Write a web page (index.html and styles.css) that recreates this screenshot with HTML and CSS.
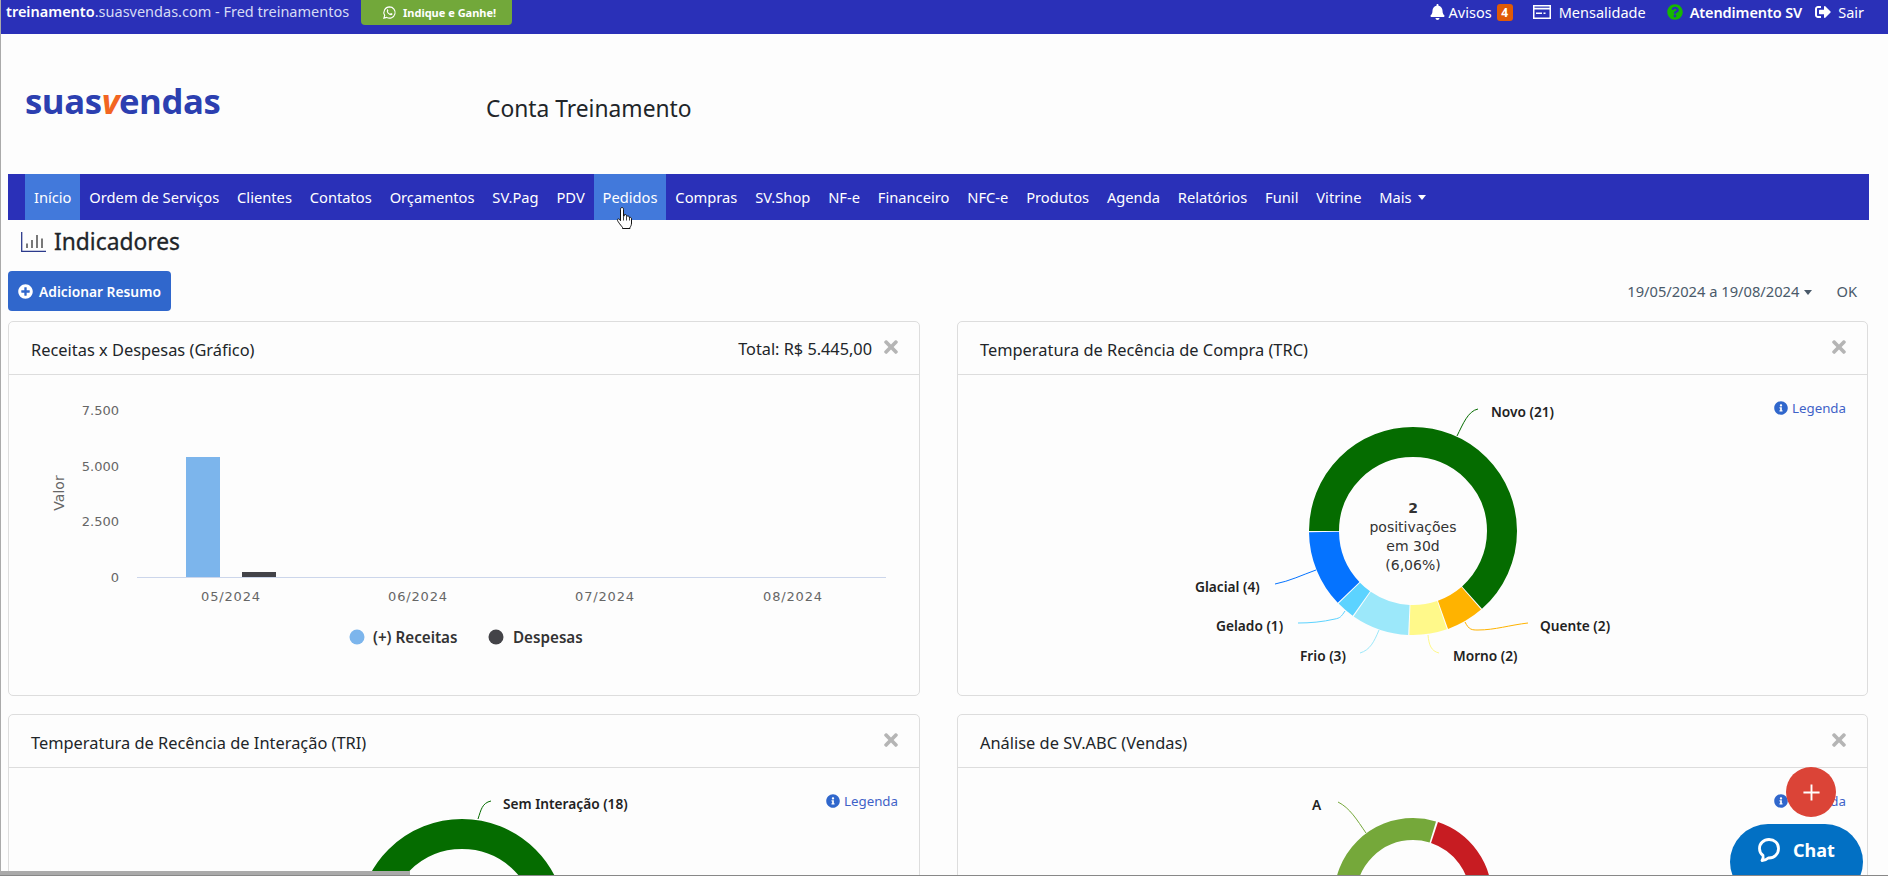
FILE: index.html
```html
<!DOCTYPE html>
<html lang="pt-BR">
<head>
    <meta charset="UTF-8">
    <meta name="viewport" content="width=device-width, initial-scale=1.0">
    <title>Indicadores - suasvendas</title>
    <link rel="stylesheet" href="styles.css">
</head>
<body>
    <svg class="icon-defs" width="0" height="0">
        <symbol id="i-close" viewBox="0 0 352 512"><path d="M242.72 256l100.07-100.07c12.28-12.28 12.28-32.19 0-44.48l-22.24-22.24c-12.28-12.28-32.19-12.28-44.48 0L176 189.28 75.93 89.21c-12.28-12.28-32.19-12.28-44.48 0L9.21 111.45c-12.28 12.28-12.28 32.19 0 44.48L109.28 256 9.21 356.07c-12.28 12.28-12.28 32.19 0 44.48l22.24 22.24c12.28 12.28 32.2 12.28 44.48 0L176 322.72l100.07 100.07c12.28 12.28 32.2 12.28 44.48 0l22.24-22.24c12.28-12.28 12.28-32.19 0-44.48L242.72 256z"/></symbol>
        <symbol id="i-info" viewBox="0 0 512 512"><path d="M256 8C119.043 8 8 119.083 8 256c0 136.997 111.043 248 248 248s248-111.003 248-248C504 119.083 392.957 8 256 8zm0 110c23.196 0 42 18.804 42 42s-18.804 42-42 42-42-18.804-42-42 18.804-42 42-42zm56 254c0 6.627-5.373 12-12 12h-88c-6.627 0-12-5.373-12-12v-24c0-6.627 5.373-12 12-12h12v-64h-12c-6.627 0-12-5.373-12-12v-24c0-6.627 5.373-12 12-12h64c6.627 0 12 5.373 12 12v100h12c6.627 0 12 5.373 12 12v24z"/></symbol>
    </svg>

    <header class="topbar">
        <div class="topbar-left">
            <span class="site"><b>treinamento</b>.suasvendas.com - Fred treinamentos</span>
            <a class="btn-indique">
                <svg class="wa" viewBox="0 0 24 24"><path d="M12 3a9 9 0 0 0-7.7 13.6L3 21l4.5-1.2A9 9 0 1 0 12 3z" fill="none" stroke="#fff" stroke-width="1.8"/><path d="M8.6 7.6c-.5.4-1.1 1.2-1 2.3.2 1.700 1.300 3.300 2.700 4.500 1.400 1.200 2.900 1.900 4.300 1.900 1 0 1.900-.7 2.200-1.500.1-.4.1-.8 0-.9l-2.200-1.100c-.2-.1-.4 0-.5.1l-.8 1c-.1.200-.3.200-.5.100-1.400-.6-2.700-1.800-3.400-3.200-.1-.2 0-.3.100-.5l.6-.8c.1-.1.100-.3.100-.4l-.9-2.200c-.2-.5-.4-.5-.7-.5h-.5z" fill="#fff"/></svg>
                Indique e Ganhe!
            </a>
        </div>
        <nav class="topbar-right">
            <a class="top-link avisos">
                <svg class="ti bell" viewBox="0 0 448 512"><path d="M224 512c35.32 0 63.97-28.65 63.97-64H160.03c0 35.35 28.65 64 63.97 64zm215.39-149.71c-19.32-20.76-55.47-51.99-55.47-154.29 0-77.7-54.48-139.9-127.94-155.16V32c0-17.67-14.32-32-31.98-32s-31.98 14.33-31.98 32v20.84C118.56 68.1 64.08 130.3 64.08 208c0 102.3-36.15 133.53-55.47 154.29-6 6.45-8.66 14.16-8.61 21.71.11 16.4 12.98 32 32.1 32h383.8c19.12 0 32-15.6 32.1-32 .05-7.55-2.61-15.27-8.61-21.71z"/></svg>
                Avisos <span class="badge">4</span>
            </a>
            <a class="top-link mensal">
                <svg class="ti card-ico" viewBox="0 0 18 16"><path fill-rule="evenodd" d="M0 1h18v14H0zM1.500 5.500v8h15v-8zM1.500 2.500v1.300h15V2.500zM3 8.500h6v1.500H3zM10.500 8.500h2v1.500h-2z"/></svg>
                Mensalidade
            </a>
            <a class="top-link atend">
                <svg class="ti help" viewBox="0 0 512 512"><path d="M504 256c0 136.997-111.043 248-248 248S8 392.997 8 256C8 119.083 119.043 8 256 8s248 111.083 248 248zM262.655 90c-54.497 0-89.255 22.957-116.549 63.758-3.536 5.286-2.353 12.415 2.715 16.258l34.699 26.31c5.205 3.947 12.621 3.008 16.665-2.122 17.864-22.658 30.113-35.797 57.303-35.797 20.429 0 45.698 13.148 45.698 32.958 0 14.976-12.363 22.667-32.534 33.976C247.128 238.528 216 254.941 216 296v4c0 6.627 5.373 12 12 12h56c6.627 0 12-5.373 12-12v-1.333c0-28.462 83.186-29.647 83.186-106.667 0-58.002-60.165-102-116.531-102zM256 338c-25.365 0-46 20.635-46 46 0 25.364 20.635 46 46 46s46-20.636 46-46c0-25.365-20.635-46-46-46z"/></svg>
                <b>Atendimento SV</b>
            </a>
            <a class="top-link sair">
                <svg class="ti" viewBox="0 0 512 512"><path d="M497 273L329 441c-15 15-41 4.500-41-17v-96H152c-13.300 0-24-10.700-24-24v-96c0-13.300 10.700-24 24-24h136V88c0-21.400 25.900-32 41-17l168 168c9.300 9.400 9.300 24.600 0 34zM192 436v-40c0-6.600-5.400-12-12-12H96c-17.700 0-32-14.300-32-32V160c0-17.700 14.300-32 32-32h84c6.600 0 12-5.400 12-12V76c0-6.600-5.400-12-12-12H96c-53 0-96 43-96 96v192c0 53 43 96 96 96h84c6.600 0 12-5.400 12-12z"/></svg>
                Sair
            </a>
        </nav>
    </header>

    <div class="brand-row">
        <div class="logo">suas<i>v</i>endas</div>
        <div class="account">Conta Treinamento</div>
    </div>

    <nav class="mainnav">
        <a class="active">Início</a>
        <a>Ordem de Serviços</a>
        <a>Clientes</a>
        <a>Contatos</a>
        <a>Orçamentos</a>
        <a>SV.Pag</a>
        <a>PDV</a>
        <a class="hover">Pedidos</a>
        <a>Compras</a>
        <a>SV.Shop</a>
        <a>NF-e</a>
        <a>Financeiro</a>
        <a>NFC-e</a>
        <a>Produtos</a>
        <a>Agenda</a>
        <a>Relatórios</a>
        <a>Funil</a>
        <a>Vitrine</a>
        <a class="more">Mais <span class="caret"></span></a>
    </nav>

    <h1 class="page-title">
        <svg class="title-ico" viewBox="0 0 25 20"><path d="M.7 0v19.300H25" fill="none" stroke="#2b3a8c" stroke-width="1.300"/><path d="M6 11.500v4.500M11 8v8M16 3v13M21 6.500V16" fill="none" stroke="#333" stroke-width="1.300"/></svg>
        Indicadores
    </h1>

    <div class="toolbar">
        <a class="btn-add">
            <svg viewBox="0 0 512 512"><path d="M256 8C119 8 8 119 8 256s111 248 248 248 248-111 248-248S393 8 256 8zm144 276c0 6.600-5.400 12-12 12h-92v92c0 6.600-5.400 12-12 12h-56c-6.600 0-12-5.400-12-12v-92h-92c-6.600 0-12-5.400-12-12v-56c0-6.600 5.400-12 12-12h92v-92c0-6.600 5.400-12 12-12h56c6.600 0 12 5.400 12 12v92h92c6.600 0 12 5.400 12 12v56z"/></svg>
            Adicionar Resumo
        </a>
        <div class="period">
            <span>19/05/2024 a 19/08/2024</span><span class="caret dark"></span>
            <span class="ok">OK</span>
        </div>
    </div>

    <main class="cards">
        <section class="card">
            <div class="card-head">
                <h2>Receitas x Despesas (Gráfico)</h2>
                <span class="total">Total: R$ 5.445,00</span>
                <svg class="close"><use href="#i-close"/></svg>
            </div>
            <div class="card-body">
                <svg class="chart" viewBox="9 375 910 320">
                    <g class="axis-y">
                        <text x="119" y="415">7.500</text>
                        <text x="119" y="471">5.000</text>
                        <text x="119" y="526">2.500</text>
                        <text x="119" y="582">0</text>
                    </g>
                    <text class="axis-title" transform="translate(64 493) rotate(-90)">Valor</text>
                    <rect x="186" y="457" width="34" height="120" fill="#7cb5ec"/>
                    <rect x="242" y="572" width="34" height="5" fill="#434348"/>
                    <path d="M137 577.500H886" stroke="#ccd6eb"/>
                    <g class="axis-x">
                        <text x="231" y="601">05/2024</text>
                        <text x="418" y="601">06/2024</text>
                        <text x="605" y="601">07/2024</text>
                        <text x="793" y="601">08/2024</text>
                    </g>
                    <circle cx="357" cy="637" r="7.500" fill="#7cb5ec"/>
                    <text class="legend" x="373" y="643">(+) Receitas</text>
                    <circle cx="496" cy="637" r="7.500" fill="#434348"/>
                    <text class="legend" x="513" y="643">Despesas</text>
                </svg>
            </div>
        </section>

        <section class="card">
            <div class="card-head">
                <h2>Temperatura de Recência de Compra (TRC)</h2>
                <svg class="close"><use href="#i-close"/></svg>
            </div>
            <div class="card-body">
                <a class="legenda"><svg><use href="#i-info"/></svg>Legenda</a>
                <svg class="chart" viewBox="958 375 910 320">
                    <!-- pathLength = total de contatos (33), cada fatia com 0.06 de folga -->
                    <g class="donut" transform="rotate(180 1413 531)">
                        <circle cx="1413" cy="531" r="89" pathLength="33" stroke="#056c00" stroke-dasharray="20.94 33"/>
                        <circle cx="1413" cy="531" r="89" pathLength="33" stroke="#ffb300" stroke-dasharray="1.94 33" stroke-dashoffset="-21"/>
                        <circle cx="1413" cy="531" r="89" pathLength="33" stroke="#fff98a" stroke-dasharray="1.94 33" stroke-dashoffset="-23"/>
                        <circle cx="1413" cy="531" r="89" pathLength="33" stroke="#9ce8fa" stroke-dasharray="2.94 33" stroke-dashoffset="-25"/>
                        <circle cx="1413" cy="531" r="89" pathLength="33" stroke="#5cd3ff" stroke-dasharray="0.94 33" stroke-dashoffset="-28"/>
                        <circle cx="1413" cy="531" r="89" pathLength="33" stroke="#0573ff" stroke-dasharray="3.94 33" stroke-dashoffset="-29"/>
                    </g>
                    <g class="leader">
                        <path stroke="#056c00" d="M1457 436C1463 424 1468 411 1478 409"/>
                        <path stroke="#ffb300" d="M1465 622C1469 630 1472 630 1478 630C1495 630 1510 625 1528 623"/>
                        <path stroke="#fff98a" d="M1428 635C1429 645 1431 651 1439 653"/>
                        <path stroke="#9ce8fa" d="M1379 630C1374 642 1370 650 1360 653"/>
                        <path stroke="#5cd3ff" d="M1345 611C1341 617 1340 618 1335 619C1322 622 1310 623 1298 623"/>
                        <path stroke="#0573ff" d="M1316 570C1302 575 1290 581 1275 584"/>
                    </g>
                    <g class="slice-label">
                        <text x="1491" y="417">Novo (21)</text>
                        <text x="1540" y="631">Quente (2)</text>
                        <text x="1453" y="661">Morno (2)</text>
                        <text x="1300" y="661">Frio (3)</text>
                        <text x="1216" y="631">Gelado (1)</text>
                        <text x="1195" y="592">Glacial (4)</text>
                    </g>
                    <g class="donut-center">
                        <text class="strong" x="1413" y="513">2</text>
                        <text x="1413" y="532">positivações</text>
                        <text x="1413" y="551">em 30d</text>
                        <text x="1413" y="570">(6,06%)</text>
                    </g>
                </svg>
            </div>
        </section>

        <section class="card">
            <div class="card-head">
                <h2>Temperatura de Recência de Interação (TRI)</h2>
                <svg class="close"><use href="#i-close"/></svg>
            </div>
            <div class="card-body">
                <a class="legenda"><svg><use href="#i-info"/></svg>Legenda</a>
                <svg class="chart" viewBox="9 768 910 320">
                    <circle class="ring" cx="462" cy="923" r="89" stroke="#056c00"/>
                    <path class="leader-line" stroke="#056c00" d="M478 819C481 810 482 803 491 801"/>
                    <text class="slice-text" x="503" y="809">Sem Interação (18)</text>
                </svg>
            </div>
        </section>

        <section class="card">
            <div class="card-head">
                <h2>Análise de SV.ABC (Vendas)</h2>
                <svg class="close"><use href="#i-close"/></svg>
            </div>
            <div class="card-body">
                <a class="legenda"><svg><use href="#i-info"/></svg>Legenda</a>
                <svg class="chart" viewBox="958 768 910 320">
                    <g class="donut thin" transform="rotate(-90 1413 897)">
                        <circle cx="1413" cy="897" r="68" pathLength="360" stroke="#c71c22" stroke-dasharray="160 200" stroke-dashoffset="-18.500"/>
                        <circle cx="1413" cy="897" r="68" pathLength="360" stroke="#75a83a" stroke-dasharray="197 163" stroke-dashoffset="-180"/>
                    </g>
                    <path class="leader-line" stroke="#75a83a" d="M1338 802C1350 808 1357 820 1366 833"/>
                    <text class="slice-text" x="1312" y="810">A</text>
                </svg>
            </div>
        </section>
    </main>

    <svg class="cursor" viewBox="0 0 18 24"><path d="M6 1.500c1 0 1.500.8 1.500 1.800v7l.7-.2V8.800c1-.7 2-.3 2.200.5l.1 1 .6-.1c.9-.5 1.900-.2 2.100.7l.1.600c1-.4 2.200 0 2.200 1.200v4.300c0 2-.7 3.200-1.500 4.500v1H6.500v-1c-1-1.500-2.500-3-4-5.300-.8-1.200-1.500-2.400-.9-3 .7-.6 1.700-.2 2.400.8l.5.700V3.300c0-1 .6-1.800 1.500-1.800z" fill="#fff" stroke="#111" stroke-width="1"/><path d="M7.500 10.500v4M10.500 10.500v4M13.500 11.500v3" stroke="#111" stroke-width=".8"/></svg>

    <a class="fab">
        <svg viewBox="0 0 20 20"><path d="M10 1.500v17M1.500 10h17" stroke="#fff" stroke-width="2"/></svg>
    </a>
    <a class="chat-btn">
        <svg viewBox="0 0 24 26"><path d="M12 2.500C6.500 2.500 2.500 6.500 2.500 11.500c0 3 1.300 5.400 3.500 7 .4 1.200-.2 3.600-1 5 2.500-.2 4.700-1 6.300-2.500h.7c5.500 0 9.500-4.200 9.500-9.500S17.500 2.500 12 2.500z" fill="none" stroke="#fff" stroke-width="2.800" stroke-linejoin="round"/></svg>
        Chat
    </a>
    <div class="scrollbar"><div class="scroll-thumb"></div></div>
</body>
</html>
```

FILE: styles.css
```css
* {
    box-sizing: border-box;
}

html, body {
    height: 876px;
    overflow: hidden;
}

body {
    margin: 0;
    background-color: #fdfdfd;
    border-left: 1px solid #aaa;
    font-family: "Noto Sans", "Open Sans", sans-serif;
    font-size: 14.7px;
    color: #212529;
}

.icon-defs {
    position: absolute;
}

a {
    color: inherit;
    text-decoration: none;
}

/* barra do topo */
.topbar {
    display: flex;
    justify-content: space-between;
    height: 34px;
    margin-left: -1px;
    padding: 0 24px 0 6px;
    background-color: #2a30b8;
    color: #fff;
}

.topbar-left {
    display: flex;
    align-items: flex-start;
}

.site {
    width: 355px;
    padding-top: 1px;
    font-size: 14.5px;
    line-height: 21px;
    color: #d6dbf5;
    white-space: nowrap;
}

.site b {
    color: #fff;
    font-weight: 600;
}

.btn-indique {
    display: flex;
    align-items: center;
    gap: 6px;
    height: 25px;
    padding: 0 16px 0 21px;
    background-color: #72a83a;
    border-radius: 0 0 4px 4px;
    font-size: 11px;
    font-weight: 700;
    white-space: nowrap;
}

.wa {
    width: 15px;
    height: 15px;
}

.topbar-right {
    display: flex;
    align-items: flex-start;
    height: 24px;
}

.top-link {
    display: flex;
    align-items: center;
    height: 24px;
    font-size: 14.5px;
    white-space: nowrap;
}

.top-link b {
    font-weight: 600;
    letter-spacing: -0.1px;
}

.ti {
    fill: #fff;
    width: 16px;
    height: 16px;
    margin-right: 4px;
}

.bell {
    width: 15px;
}

.badge {
    display: inline-block;
    width: 16px;
    height: 17px;
    margin-left: 5px;
    background-color: #e05a06;
    border-radius: 3px;
    font-size: 12px;
    font-weight: 700;
    line-height: 17px;
    text-align: center;
}

.mensal {
    margin-left: 20px;
}

.card-ico {
    width: 18px;
    margin-right: 8px;
}

.atend {
    margin-left: 21px;
}

.help {
    fill: #16b800;
    margin-right: 7px;
}

.sair {
    margin-left: 13px;
}

.sair .ti {
    margin-right: 7px;
}

/* logo e conta */
.brand-row {
    display: flex;
    height: 140px;
}

.logo {
    width: 485px;
    padding: 42px 0 0 24px;
    font-family: "Open Sans", sans-serif;
    font-size: 34.7px;
    font-weight: 700;
    line-height: 50px;
    letter-spacing: -0.4px;
    color: #2c3fb0;
}

.logo i {
    color: #f26522;
}

.account {
    padding-top: 58px;
    font-size: 22.8px;
    line-height: 34px;
    color: #212529;
}

/* menu principal */
.mainnav {
    display: flex;
    height: 46px;
    margin: 0 19px 0 7px;
    padding-left: 17px;
    background-color: #2a30b8;
    color: #fff;
}

.mainnav a {
    display: flex;
    align-items: center;
    padding: 0 8.93px;
    white-space: nowrap;
}

.mainnav .active,
.mainnav .hover {
    background-color: #4279db;
}

.more {
    gap: 6px;
}

.caret {
    display: inline-block;
    border-top: 5px solid #fff;
    border-left: 4px solid transparent;
    border-right: 4px solid transparent;
}

.caret.dark {
    border-top-color: #4a5a6a;
    margin-left: 5px;
    margin-top: 2px;
}

.page-title {
    display: flex;
    align-items: center;
    height: 44px;
    margin: 0;
    padding-left: 20px;
    font-size: 22.8px;
    font-weight: 400;
    line-height: 34px;
    -webkit-text-stroke: 0.3px #212529;
}

.title-ico {
    width: 25px;
    height: 20px;
    margin-right: 8px;
}

.toolbar {
    display: flex;
    align-items: center;
    justify-content: space-between;
    height: 40px;
    margin: 7px 31px 10px 7px;
}

.btn-add {
    display: flex;
    align-items: center;
    gap: 6px;
    width: 163px;
    height: 40px;
    padding-left: 10px;
    background-color: #3067cc;
    border-radius: 4px;
    color: #fff;
    font-weight: 600;
    font-size: 13.8px;
    white-space: nowrap;
}

.btn-add svg {
    width: 15px;
    height: 15px;
    fill: #fff;
}

.period {
    display: flex;
    align-items: center;
    font-size: 14.7px;
    color: #4a5a6a;
}

.ok {
    margin-left: 24px;
}

/* cards */
.cards {
    display: grid;
    grid-template-columns: 912px 911px;
    grid-auto-rows: 375px;
    gap: 18px 37px;
    margin-left: 7px;
}

.card {
    display: flex;
    flex-direction: column;
    border: 1px solid #ddd;
    border-radius: 5px;
}

.card-head {
    display: flex;
    align-items: center;
    flex: none;
    height: 53px;
    padding: 2px 21px 0 22px;
    border-bottom: 1px solid #ddd;
}

.card-head h2 {
    flex: 1;
    margin: 0;
    font-size: 16.4px;
    font-weight: 400;
}

.total {
    margin-right: 12px;
    font-size: 16.3px;
}

.close {
    width: 14px;
    height: 20px;
    fill: #b5b5b5;
    margin-bottom: 4px;
}

.card-body {
    position: relative;
    flex: 1;
}

.chart {
    display: block;
    width: 910px;
    height: 320px;
}

.legenda {
    position: absolute;
    top: 24px;
    right: 21px;
    display: flex;
    align-items: center;
    gap: 4px;
    font-size: 13.3px;
    color: #3f62c8;
}

.legenda svg {
    width: 14px;
    height: 14px;
    fill: #3067cc;
}

/* graficos */
.chart text {
    font-family: "DejaVu Sans", sans-serif;
    font-size: 13px;
}

.axis-y text {
    text-anchor: end;
    fill: #666;
}

.axis-x text {
    text-anchor: middle;
    letter-spacing: 0.85px;
    fill: #666;
}

.chart .axis-title {
    font-size: 14px;
    text-anchor: middle;
    fill: #666;
}

.chart .legend {
    font-family: "Noto Sans", sans-serif;
    font-size: 15.2px;
    font-weight: 600;
    fill: #333;
}

.donut circle,
.ring {
    fill: none;
    stroke-width: 30;
}

.donut.thin circle {
    stroke-width: 22;
}

.leader path,
.leader-line {
    fill: none;
    stroke-width: 1;
}

.chart .slice-label text,
.chart .slice-text {
    font-family: "Noto Sans", sans-serif;
    font-size: 13.7px;
    font-weight: 600;
    fill: #222;
}

.donut-center text {
    text-anchor: middle;
    fill: #333;
}

.chart .donut-center text {
    font-size: 14px;
}

.chart .donut-center .strong {
    font-weight: 700;
}

/* sobrepostos */
.cursor {
    position: absolute;
    left: 616px;
    top: 206px;
    width: 18px;
    height: 24px;
}

.fab {
    position: fixed;
    left: 1786px;
    top: 767px;
    display: flex;
    align-items: center;
    justify-content: center;
    width: 50px;
    height: 50px;
    background-color: #db4437;
    border-radius: 50%;
}

.fab svg {
    width: 19px;
    height: 19px;
}

.chat-btn {
    position: fixed;
    left: 1730px;
    top: 824px;
    display: flex;
    align-items: center;
    gap: 12px;
    width: 133px;
    height: 76px;
    padding: 0 0 24px 27px;
    background-color: #0270c4;
    border-radius: 38px;
    font-size: 18px;
    font-weight: 700;
    color: #fff;
}

.chat-btn svg {
    width: 24px;
    height: 26px;
}

.scrollbar {
    position: fixed;
    left: 0;
    right: 0;
    bottom: 0;
    height: 5px;
    border-bottom: 1px solid #888;
}

.scroll-thumb {
    width: 410px;
    height: 4px;
    background-color: #aaa;
}
```
